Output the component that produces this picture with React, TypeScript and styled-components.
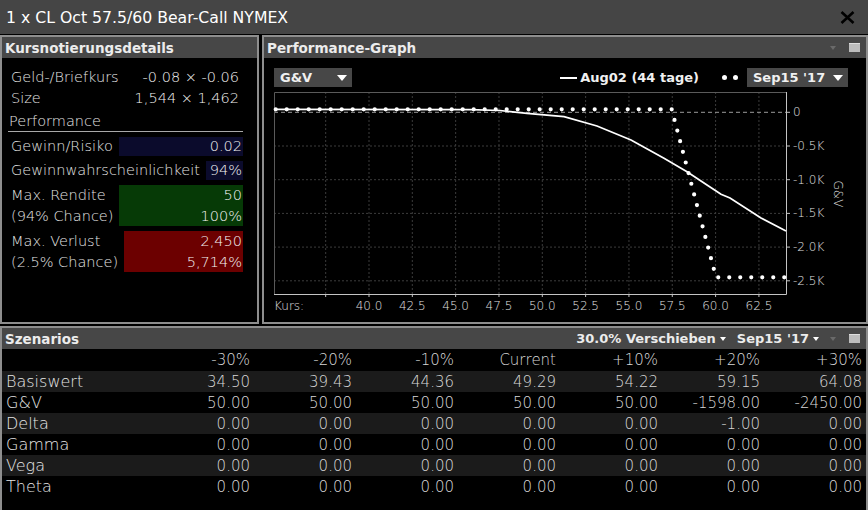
import React from 'react';
import styled, { createGlobalStyle } from 'styled-components';

const GlobalStyle = createGlobalStyle`
    html, body {
        margin: 0;
        padding: 0;
        background: #000;
    }
    body {
        font-family: "DejaVu Sans", "Liberation Sans", sans-serif;
    }
    * { box-sizing: border-box; }
`

const Window = styled.div`
    width: 868px;
    height: 510px;
    background: #000;
    display: flex;
    flex-direction: column;
    overflow: hidden;
`
const TitleBar = styled.div`
    height: 34px;
    flex: none;
    background: #454545;
    display: flex;
    align-items: center;
    justify-content: space-between;
    padding: 0 13px 0 6px;
    color: #fff;
    font-size: 15.7px;
`
const CloseBtn = styled.button`
    background: none;
    border: 0;
    padding: 0;
    width: 15px;
    height: 13px;
    display: flex;
    cursor: pointer;
`
const TopRow = styled.div`
    display: flex;
    gap: 3px;
    height: 289px;
    margin-top: 1px;
    flex: none;
`
const Panel = styled.section`
    border: 2px solid #8e8e8e;
    display: flex;
    flex-direction: column;
    background: #000;
    min-width: 0;
`
const QuotePanel = styled(Panel)`
    width: 259px;
    flex: none;
`
const GraphPanel = styled(Panel)`
    flex: 1;
`
const ScenarioPanel = styled(Panel)`
    flex: 1;
    margin-top: 2px;
    border-bottom: 0;
`
const PanelHeader = styled.header`
    height: 21px;
    flex: none;
    background: #474747;
    display: flex;
    align-items: center;
    padding: 0 6px 0 3px;
    color: #ececec;
    font-weight: bold;
    font-size: 13.5px;
`
const HeaderTitle = styled.span`
    flex: 1;
`
const HeaderTools = styled.div`
    display: flex;
    align-items: center;
    gap: 11px;
    font-size: 13px;
`
const MenuItem = styled.span`
    display: flex;
    align-items: center;
    gap: 4px;
    cursor: pointer;
`
const Caret = styled.span<{ $size?: number; $color?: string }>`
    width: 0;
    height: 0;
    border-left: ${p => p.$size ?? 3}px solid transparent;
    border-right: ${p => p.$size ?? 3}px solid transparent;
    border-top: ${p => Math.round((p.$size ?? 3) * 1.2)}px solid ${p => p.$color ?? '#fff'};
`
const DockBox = styled.span`
    width: 11px;
    height: 9px;
    margin-left: 2px;
    background: #bdbdbd;
    border-top: 1px solid #dedede;
`

/* Kursnotierungsdetails */
const QuoteBody = styled.div`
    padding: 8px 14px 0 6px;
    display: flex;
    flex-direction: column;
    font-size: 14.5px;
    font-weight: 200;
    color: #e4e4e4;
`
const QuoteRow = styled.div`
    height: 21px;
    display: flex;
    align-items: center;
    justify-content: space-between;
    padding: 0 4px 0 3px;
    span:last-child { color: #f2f2f2; }
`
const SectionTitle = styled.div`
    padding: 3px 0 0 1px;
    line-height: 20px;
    border-bottom: 1px solid #a8a8a8;
`
const MetricRow = styled.div<{ $h?: number }>`
    display: flex;
    margin-top: 5px;
    padding-left: 3px;
    line-height: 20.5px;
    ${p => (p.$h ? `height: ${p.$h}px;` : '')}
`
const MetricLabel = styled.div`
    white-space: nowrap;
    display: flex;
    flex-direction: column;
    justify-content: center;
`
const MetricValue = styled.div<{ $bg: string }>`
    flex: 1;
    margin-left: 6px;
    background: ${p => p.$bg};
    color: #f4f4f4;
    text-align: right;
    padding-right: 1px;
    display: flex;
    flex-direction: column;
    justify-content: center;
`

/* Performance-Graph */
const GraphBody = styled.div`
    flex: 1;
    display: flex;
    flex-direction: column;
    padding-top: 10px;
`
const GraphToolbar = styled.div`
    height: 19px;
    flex: none;
    display: flex;
    align-items: center;
    padding: 0 18px 0 10px;
    color: #f0f0f0;
    font-weight: bold;
    font-size: 13px;
`
const Select = styled.div<{ $w: number }>`
    width: ${p => p.$w}px;
    height: 19px;
    background: #474747;
    display: flex;
    align-items: center;
    justify-content: space-between;
    padding: 0 5px 0 6px;
    cursor: pointer;
`
const Legend = styled.div`
    margin-left: auto;
    display: flex;
    align-items: center;
    gap: 9px;
`
const LegendItem = styled.span`
    display: flex;
    align-items: center;
    gap: 3px;
`
const SolidSwatch = styled.span`
    width: 17px;
    height: 2px;
    background: #fff;
`
const DotSwatch = styled.span`
    display: flex;
    gap: 6px;
    margin: 0 0 0 14px;
    i {
        width: 5px;
        height: 5px;
        border-radius: 50%;
        background: #fff;
    }
`
const Plot = styled.svg`
    display: block;
    flex: 1;
    font-family: "DejaVu Sans", sans-serif;
    font-size: 12px;
    font-weight: 200;
`

/* Szenarios */
const Table = styled.div`
    display: flex;
    flex-direction: column;
    font-weight: 200;
`
const Row = styled.div<{ $alt?: boolean; $head?: boolean }>`
    display: grid;
    grid-template-columns: 146px repeat(7, 102px);
    height: ${p => (p.$head ? 22 : 21)}px;
    align-items: center;
    background: ${p => (p.$alt ? '#1b1b1b' : '#000')};
`
const RowLabel = styled.div`
    padding-left: 4px;
    font-size: 16px;
    color: #e6e6e6;
`
const Cell = styled.div`
    text-align: right;
    font-size: 15px;
    color: #d8d8d8;
`

const Close = () => (
    <CloseBtn aria-label="close">
        <svg width="15" height="13" viewBox="0 0 15 13">
            <path d="M1.5 1 L13.5 12 M13.5 1 L1.5 12" stroke="#000" strokeWidth="2.6" />
        </svg>
    </CloseBtn>
)

// chart geometry, in page pixels
const L = 274, T = 92, R = 786, B = 294
const xOf = (k: number) => 369 + (k - 40) * 17.33
const yOf = (v: number) => 112.3 - v * 67.4
const xTicks = [37.5, 40, 42.5, 45, 47.5, 50, 52.5, 55, 57.5, 60, 62.5]
const yTicks = [
    { v: 0, t: '0' },
    { v: -0.5, t: '-0.5K' },
    { v: -1, t: '-1.0K' },
    { v: -1.5, t: '-1.5K' },
    { v: -2, t: '-2.0K' },
    { v: -2.5, t: '-2.5K' },
]
const aug02 = [
    [274, 109.3], [470, 109.6], [500, 110.5], [527, 113.3], [564, 116.7], [597, 126],
    [631, 140], [664, 158.3], [687, 171.7], [707, 185], [721, 194.3], [730, 198],
    [761, 218], [786, 231],
]
const sep15 = [[275.7, 109.3], [671.7, 109.3], [716, 277.3], [786, 277.3]]

const PerformanceChart = () => (
    <Plot viewBox="264 87 602 235" width="602" height="235">
        {xTicks.map(k => (
            <line key={'gx' + k} x1={xOf(k)} x2={xOf(k)} y1={T} y2={B} stroke="#3c3c3c" strokeDasharray="2 2" />
        ))}
        {yTicks.slice(1).map(y => (
            <line key={'gy' + y.v} x1={L} x2={R} y1={yOf(y.v)} y2={yOf(y.v)} stroke="#3c3c3c" strokeDasharray="2 2" />
        ))}
        <line x1={L} x2={R} y1={yOf(0)} y2={yOf(0)} stroke="#9a9a9a" strokeDasharray="4 3" />
        <path d={`M${L + 0.5} ${B} V${T + 0.5} H${R}`} fill="none" stroke="#5a5a5a" />
        <path d={`M${L} ${B + 0.5} H${R + 0.5} V${T}`} fill="none" stroke="#c4c4c4" />
        {xTicks.map(k => (
            <line key={'tx' + k} x1={xOf(k)} x2={xOf(k)} y1={B} y2={B + 3} stroke="#c4c4c4" />
        ))}
        {yTicks.map(y => (
            <line key={'ty' + y.v} x1={R} x2={R + 4} y1={yOf(y.v)} y2={yOf(y.v)} stroke="#c4c4c4" />
        ))}
        {yTicks.map(y => (
            <text key={'ly' + y.v} x={793} y={yOf(y.v)} dominantBaseline="central" fill="#e0e0e0">{y.t}</text>
        ))}
        <text x={L} y={306} dominantBaseline="central" fill="#e0e0e0">Kurs:</text>
        {xTicks.slice(1).map(k => (
            <text key={'lx' + k} x={xOf(k)} y={306} dominantBaseline="central" textAnchor="middle" fill="#e0e0e0">
                {k.toFixed(1)}
            </text>
        ))}
        <text x={838} y={194} transform="rotate(90 838 194)" textAnchor="middle" dominantBaseline="central" fill="#e0e0e0">G&amp;V</text>
        <polyline points={aug02.map(p => p.join(',')).join(' ')} fill="none" stroke="#fff" strokeWidth="1.7" />
        <polyline points={sep15.map(p => p.join(',')).join(' ')} fill="none" stroke="#fff" strokeWidth="4.2" strokeLinecap="round" strokeDasharray="0 11" />
    </Plot>
)

const cols = ['-30%', '-20%', '-10%', 'Current', '+10%', '+20%', '+30%']
const rows: [string, string[]][] = [
    ['Basiswert', ['34.50', '39.43', '44.36', '49.29', '54.22', '59.15', '64.08']],
    ['G&V', ['50.00', '50.00', '50.00', '50.00', '50.00', '-1598.00', '-2450.00']],
    ['Delta', ['0.00', '0.00', '0.00', '0.00', '0.00', '-1.00', '0.00']],
    ['Gamma', ['0.00', '0.00', '0.00', '0.00', '0.00', '0.00', '0.00']],
    ['Vega', ['0.00', '0.00', '0.00', '0.00', '0.00', '0.00', '0.00']],
    ['Theta', ['0.00', '0.00', '0.00', '0.00', '0.00', '0.00', '0.00']],
]

const App = () => {
    return (
        <Window>
            <GlobalStyle />
            <TitleBar>
                <span>1 x CL Oct 57.5/60 Bear-Call NYMEX</span>
                <Close />
            </TitleBar>
            <TopRow>
                <QuotePanel>
                    <PanelHeader>
                        <HeaderTitle>Kursnotierungsdetails</HeaderTitle>
                    </PanelHeader>
                    <QuoteBody>
                        <QuoteRow><span>Geld-/Briefkurs</span><span>-0.08 × -0.06</span></QuoteRow>
                        <QuoteRow><span>Size</span><span>1,544 × 1,462</span></QuoteRow>
                        <SectionTitle>Performance</SectionTitle>
                        <MetricRow $h={19}>
                            <MetricLabel>Gewinn/Risiko</MetricLabel>
                            <MetricValue $bg="#0b0b2c">0.02</MetricValue>
                        </MetricRow>
                        <MetricRow $h={19}>
                            <MetricLabel>Gewinnwahrscheinlichkeit</MetricLabel>
                            <MetricValue $bg="#0b0b2c">94%</MetricValue>
                        </MetricRow>
                        <MetricRow>
                            <MetricLabel><span>Max. Rendite</span><span>(94% Chance)</span></MetricLabel>
                            <MetricValue $bg="#063a06"><span>50</span><span>100%</span></MetricValue>
                        </MetricRow>
                        <MetricRow>
                            <MetricLabel><span>Max. Verlust</span><span>(2.5% Chance)</span></MetricLabel>
                            <MetricValue $bg="#6c0000"><span>2,450</span><span>5,714%</span></MetricValue>
                        </MetricRow>
                    </QuoteBody>
                </QuotePanel>
                <GraphPanel>
                    <PanelHeader>
                        <HeaderTitle>Performance-Graph</HeaderTitle>
                        <HeaderTools>
                            <Caret $color="#6a6a6a" />
                            <DockBox />
                        </HeaderTools>
                    </PanelHeader>
                    <GraphBody>
                        <GraphToolbar>
                            <Select $w={78}>G&amp;V<Caret $size={5} /></Select>
                            <Legend>
                                <LegendItem><SolidSwatch />Aug02 (44 tage)</LegendItem>
                                <DotSwatch><i /><i /></DotSwatch>
                                <Select $w={101}>Sep15 '17<Caret $size={5} /></Select>
                            </Legend>
                        </GraphToolbar>
                        <PerformanceChart />
                    </GraphBody>
                </GraphPanel>
            </TopRow>
            <ScenarioPanel>
                <PanelHeader>
                    <HeaderTitle>Szenarios</HeaderTitle>
                    <HeaderTools>
                        <MenuItem>30.0% Verschieben<Caret /></MenuItem>
                        <MenuItem>Sep15 '17<Caret /></MenuItem>
                        <Caret $color="#6a6a6a" />
                        <DockBox />
                    </HeaderTools>
                </PanelHeader>
                <Table>
                    <Row $head>
                        <RowLabel />
                        {cols.map(c => <Cell key={c}>{c}</Cell>)}
                    </Row>
                    {rows.map(([label, vals], i) => (
                        <Row key={label} $alt={i % 2 === 0}>
                            <RowLabel>{label}</RowLabel>
                            {vals.map((v, j) => <Cell key={j}>{v}</Cell>)}
                        </Row>
                    ))}
                </Table>
            </ScenarioPanel>
        </Window>
    )
}

export default App;
